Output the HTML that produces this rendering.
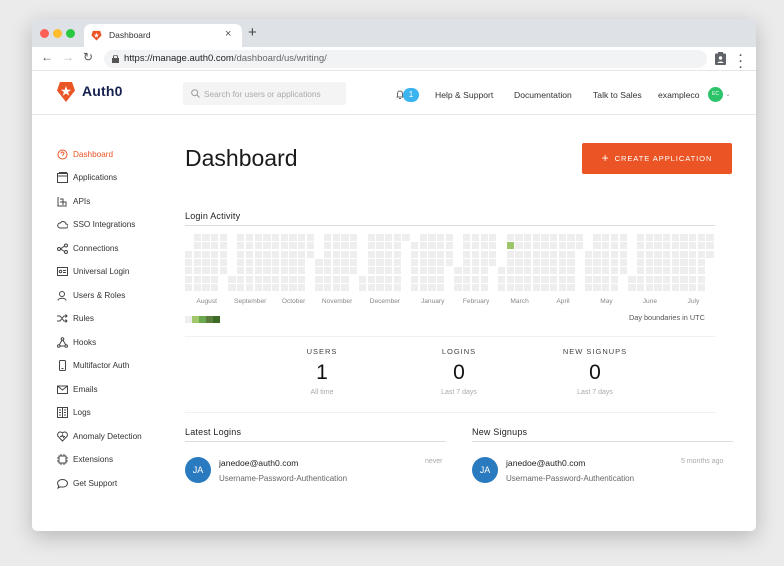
<!DOCTYPE html>
<html><head><meta charset="utf-8"><style>
*{box-sizing:border-box;margin:0;padding:0}
body{width:784px;height:566px;background:#ebebeb;font-family:"Liberation Sans",sans-serif;position:relative;overflow:hidden}
.win{position:absolute;left:32px;top:19px;width:724px;height:512px;background:#fff;border-radius:5px;overflow:hidden;box-shadow:0 6px 22px rgba(0,0,0,.22)}
.tabbar{position:absolute;left:0;top:0;width:100%;height:28px;background:#dee1e6}
.dot{position:absolute;top:10px;width:9px;height:9px;border-radius:50%}
.tab{position:absolute;left:52px;top:5px;width:158px;height:24px;background:#fff;border-radius:7px 7px 0 0;font-size:8.5px;color:#333}
.addr{position:absolute;left:0;top:28px;width:100%;height:24px;background:#fff;border-bottom:1px solid #e5e5e5}
.pill{position:absolute;left:72px;top:3px;width:603px;height:18px;background:#f1f3f4;border-radius:9px;font-size:9.5px;color:#222;line-height:18px;padding-left:20px}
.abs{position:absolute}
.hdr{position:absolute;left:0;top:52px;width:100%;height:44px;border-bottom:1px solid #e8e8e8}
.nav{font-size:8.6px;color:#333;position:absolute;top:71px}
.side{position:absolute;left:41px;font-size:8.2px;color:#333}
.side div{position:absolute;left:0;white-space:nowrap;height:12px;line-height:12px}
.side svg{position:absolute;left:-16px;top:0}
.sec{position:absolute;font-size:9px;color:#222;letter-spacing:.2px}
.line{position:absolute;height:1px;background:#dcdcdc}
.mo{position:absolute;top:279px;font-size:6.6px;color:#888;transform:translateX(-50%)}
.stat{position:absolute;text-align:center;width:120px;transform:translateX(-50%)}
.stat .l{font-size:7.5px;letter-spacing:1px;color:#444}
.stat .n{font-size:21px;color:#111;margin-top:5px}
.stat .s{font-size:7px;color:#aaa;margin-top:4px}
.av{position:absolute;width:26px;height:26px;border-radius:50%;background:#2a7abf;color:#fff;font-size:9px;text-align:center;line-height:26px}
</style></head><body>
<div class="win">
<div class="tabbar">
<div class="dot" style="left:8px;background:#fe5f57"></div>
<div class="dot" style="left:21px;background:#febc2e"></div>
<div class="dot" style="left:34px;background:#28c840"></div>
<div class="tab">
<svg class="abs" style="left:7px;top:6px" width="11" height="11" viewBox="0 0 12 12"><path d="M2 1h8l1.5 5L6 11.5 .5 6z" fill="#eb5424"/><path d="M6 3l.8 2h2l-1.6 1.3.6 2L6 7.1 4.2 8.3l.6-2L3.2 5h2z" fill="#fff"/></svg>
<span class="abs" style="left:25px;top:6px">Dashboard</span>
<span class="abs" style="left:141px;top:4px;font-size:11px;color:#555">×</span>
</div>
<span class="abs" style="left:216px;top:5px;font-size:15px;color:#444">+</span>
</div>
<div class="addr">
<span class="abs" style="left:9px;top:3px;font-size:12px;color:#555">←</span>
<span class="abs" style="left:30px;top:3px;font-size:12px;color:#bbb">→</span>
<span class="abs" style="left:51px;top:3px;font-size:12px;color:#555">↻</span>
<div class="pill"><svg class="abs" style="left:8px;top:5px" width="7" height="8" viewBox="0 0 7 8"><rect x="0" y="3" width="7" height="5" fill="#555"/><path d="M1.5 3.5V2a2 2 0 014 0v1.5" stroke="#555" fill="none"/></svg>https://manage.auth0.com<span style="color:#666">/dashboard/us/writing/</span></div>
<svg class="abs" style="left:683px;top:5px" width="11" height="13" viewBox="0 0 11 13"><rect x="0" y="1.5" width="11" height="11.5" rx="1" fill="#5f6368"/><rect x="3" y="0" width="5" height="3" fill="#5f6368"/><circle cx="5.5" cy="6" r="1.7" fill="#fff"/><path d="M2.5 11c0-2 6-2 6 0z" fill="#fff"/></svg>
<span class="abs" style="left:707px;font-size:11px;color:#555;font-weight:bold;line-height:6px;top:6px">·<br>·<br>·</span>
</div>
<div class="hdr"></div>
<svg class="abs" style="left:24px;top:62px" width="20" height="22" viewBox="0 0 20 22"><path d="M4 1h12l3 8.5L10 21 1 9.5z" fill="#eb5424"/><path d="M10 5l1.3 3.7h3.9l-3.1 2.3 1.2 3.8L10 12.5l-3.3 2.3 1.2-3.8-3.1-2.3h3.9z" fill="#fff"/></svg>
<span class="abs" style="left:50px;top:64px;font-size:14px;color:#16214d;font-weight:bold;letter-spacing:.2px">Auth0</span>
<div class="abs" style="left:151px;top:63px;width:163px;height:23px;background:#f4f4f4;border-radius:2px"></div>
<svg class="abs" style="left:159px;top:70px" width="9" height="9" viewBox="0 0 9 9"><circle cx="3.7" cy="3.7" r="3" stroke="#999" fill="none"/><path d="M6 6l2.5 2.5" stroke="#999"/></svg>
<span class="abs" style="left:172px;top:70px;font-size:8.3px;color:#aaa">Search for users or applications</span>
<svg class="abs" style="left:364px;top:71px" width="8" height="9" viewBox="0 0 8 9"><path d="M1.5 7V3.5a2.5 2.5 0 015 0V7M.5 7h7M3 8.5h2" stroke="#666" fill="none"/></svg>
<div class="abs" style="left:371px;top:69px;width:16px;height:14px;border-radius:7px;background:#3bb4ef;color:#fff;font-size:8px;text-align:center;line-height:14px">1</div>
<span class="nav" style="left:403px">Help &amp; Support</span>
<span class="nav" style="left:482px">Documentation</span>
<span class="nav" style="left:561px">Talk to Sales</span>
<span class="nav" style="left:626px">exampleco</span>
<div class="abs" style="left:676px;top:68px;width:15px;height:15px;border-radius:50%;background:#2dc36a;color:#fff;font-size:5px;text-align:center;line-height:15px">EC</div>
<span class="abs" style="left:693px;top:71px;font-size:7px;color:#999">⌄</span>

<div class="side">
<div style="top:130px;color:#eb5424"><svg width="11" height="11" viewBox="0 0 11 11"><circle cx="5.5" cy="5.5" r="4.5" stroke="#eb5424" fill="none"/><path d="M4 4.5a1.5 1.5 0 113 0c0 1-1.5 1-1.5 2.3" stroke="#eb5424" fill="none"/></svg>Dashboard</div>
<div style="top:153px"><svg width="11" height="11" viewBox="0 0 11 11"><rect x=".5" y="1.5" width="10" height="9" stroke="#444" fill="none"/><path d="M.5 4h10M2 .5h8" stroke="#444"/></svg>Applications</div>
<div style="top:177px"><svg width="11" height="11" viewBox="0 0 11 11"><path d="M1 1v9h9M3 3h3v6M6 6h3v3M3 6h6" stroke="#444" fill="none"/></svg>APIs</div>
<div style="top:200px"><svg width="11" height="11" viewBox="0 0 11 11"><path d="M3 9h6a2 2 0 000-4 3 3 0 00-5.5-1A2.5 2.5 0 003 9z" stroke="#444" fill="none"/></svg>SSO Integrations</div>
<div style="top:224px"><svg width="11" height="11" viewBox="0 0 11 11"><circle cx="2" cy="6" r="1.5" stroke="#444" fill="none"/><circle cx="9" cy="2.5" r="1.5" stroke="#444" fill="none"/><circle cx="9" cy="9" r="1.5" stroke="#444" fill="none"/><path d="M3.5 6l4-3M3.5 6l4 2.5" stroke="#444"/></svg>Connections</div>
<div style="top:247px"><svg width="11" height="11" viewBox="0 0 11 11"><rect x=".5" y="1.5" width="10" height="8" stroke="#444" fill="none"/><circle cx="3.5" cy="5.5" r="1.3" stroke="#444" fill="none"/><path d="M6 4.5h3M6 6.5h3" stroke="#444"/></svg>Universal Login</div>
<div style="top:271px"><svg width="11" height="11" viewBox="0 0 11 11"><circle cx="5" cy="4" r="2.5" stroke="#444" fill="none"/><path d="M1 10.5c0-3 8-3 8 0" stroke="#444" fill="none"/></svg>Users &amp; Roles</div>
<div style="top:294px"><svg width="11" height="11" viewBox="0 0 11 11"><path d="M0 3h3l4 5h3M0 8h3l4-5h3M8.5 1.5L10 3 8.5 4.5M8.5 6.5L10 8 8.5 9.5" stroke="#444" fill="none"/></svg>Rules</div>
<div style="top:318px"><svg width="11" height="11" viewBox="0 0 11 11"><circle cx="5.5" cy="2" r="1.3" stroke="#444" fill="none"/><circle cx="1.8" cy="9" r="1.3" stroke="#444" fill="none"/><circle cx="9.2" cy="9" r="1.3" stroke="#444" fill="none"/><path d="M5 3.2L2.3 7.8M6 3.2l2.7 4.6M3 9h5" stroke="#444"/></svg>Hooks</div>
<div style="top:341px"><svg width="11" height="11" viewBox="0 0 11 11"><rect x="2.5" y=".5" width="6" height="10" rx="1" stroke="#444" fill="none"/><path d="M4.5 8.5h2" stroke="#444"/></svg>Multifactor Auth</div>
<div style="top:365px"><svg width="11" height="11" viewBox="0 0 11 11"><rect x=".5" y="2" width="10" height="7.5" stroke="#444" fill="none"/><path d="M.5 2l5 4 5-4" stroke="#444" fill="none"/></svg>Emails</div>
<div style="top:388px"><svg width="11" height="11" viewBox="0 0 11 11"><rect x=".5" y=".5" width="10" height="10" stroke="#444" fill="none"/><path d="M5.5 .5v10M2 3h2M2 5.5h2M2 8h2M7 3h2M7 5.5h2M7 8h2" stroke="#444"/></svg>Logs</div>
<div style="top:412px"><svg width="11" height="11" viewBox="0 0 11 11"><path d="M5.5 10L1.2 5.5A2.5 2.5 0 015.5 2a2.5 2.5 0 014.3 3.5z" stroke="#444" fill="none"/><path d="M3 5.5h1.5l1-1.5 1 2.5.8-1H8" stroke="#444" fill="none"/></svg>Anomaly Detection</div>
<div style="top:435px"><svg width="11" height="11" viewBox="0 0 11 11"><rect x="2" y="2" width="7" height="7" stroke="#444" fill="none"/><path d="M4 0v2M7 0v2M4 9v2M7 9v2M0 4h2M0 7h2M9 4h2M9 7h2" stroke="#444"/></svg>Extensions</div>
<div style="top:459px"><svg width="11" height="11" viewBox="0 0 11 11"><path d="M5.5 1.5c2.8 0 5 1.7 5 3.8s-2.2 3.8-5 3.8c-.7 0-1.3-.1-1.9-.3L1 10l.9-2.2C1 7.1.5 6.2.5 5.3.5 3.2 2.7 1.5 5.5 1.5z" stroke="#444" fill="none"/></svg>Get Support</div>
</div>

<span class="abs" style="left:153px;top:126px;font-size:23px;color:#1a1a1a">Dashboard</span>
<div class="abs" style="left:550px;top:124px;width:150px;height:31px;background:#eb5424;border-radius:2px;color:#fff;font-size:7.6px;letter-spacing:.9px;line-height:31px;text-align:center"><span style="font-size:12px;vertical-align:-1px;margin-right:5px">+</span>CREATE APPLICATION</div>

<span class="sec" style="left:153px;top:192px">Login Activity</span>
<div class="line" style="left:153px;top:206px;width:530px"></div>
<div id="grid"></div>
<span class="abs" style="left:597px;top:294px;font-size:7.3px;color:#555">Day boundaries in UTC</span>
<div class="abs" style="left:153px;top:297px;width:7px;height:7px;background:#eee"></div>
<div class="abs" style="left:160px;top:297px;width:7px;height:7px;background:#a1c76b"></div>
<div class="abs" style="left:167px;top:297px;width:7px;height:7px;background:#6aa84f"></div>
<div class="abs" style="left:174px;top:297px;width:7px;height:7px;background:#5b7d3c"></div>
<div class="abs" style="left:181px;top:297px;width:7px;height:7px;background:#3d6b26"></div>
<div class="line" style="left:153px;top:317px;width:530px;background:#f0f0f0"></div>

<div class="stat" style="left:290px;top:328px"><div class="l">USERS</div><div class="n">1</div><div class="s">All time</div></div>
<div class="stat" style="left:427px;top:328px"><div class="l">LOGINS</div><div class="n">0</div><div class="s">Last 7 days</div></div>
<div class="stat" style="left:563px;top:328px"><div class="l">NEW SIGNUPS</div><div class="n">0</div><div class="s">Last 7 days</div></div>
<div class="line" style="left:153px;top:393px;width:530px;background:#f0f0f0"></div>

<span class="sec" style="left:153px;top:408px">Latest Logins</span>
<div class="line" style="left:153px;top:422px;width:261px"></div>
<span class="sec" style="left:440px;top:408px">New Signups</span>
<div class="line" style="left:440px;top:422px;width:261px"></div>
<div class="av" style="left:153px;top:438px">JA</div>
<span class="abs" style="left:187px;top:439px;font-size:8.6px;color:#222">janedoe@auth0.com</span>
<span class="abs" style="left:187px;top:455px;font-size:8px;color:#666">Username-Password-Authentication</span>
<span class="abs" style="left:393px;top:439px;font-size:7px;color:#aaa">never</span>
<div class="av" style="left:440px;top:438px">JA</div>
<span class="abs" style="left:474px;top:439px;font-size:8.6px;color:#222">janedoe@auth0.com</span>
<span class="abs" style="left:474px;top:455px;font-size:8px;color:#666">Username-Password-Authentication</span>
<span class="abs" style="left:649px;top:439px;font-size:7px;color:#aaa">5 months ago</span>
</div>
<script>
var g=document.getElementById('grid'),h='';
var months=[[2,31,'August'],[5,30,'September'],[0,31,'October'],[3,30,'November'],[5,31,'December'],[1,31,'January'],[4,28,'February'],[4,31,'March'],[0,30,'April'],[2,31,'May'],[5,30,'June'],[0,31,'July']];
var col=0,P=8.69,X=153,Y=215,RP=8.35;
months.forEach(function(m,mi){var s=col;var d=m[0];for(var i=1;i<=m[1];i++){var c='#eee';if(mi==7&&i==5)c='#9cc46a';h+='<div style="position:absolute;left:'+(X+col*P).toFixed(1)+'px;top:'+(Y+d*RP).toFixed(1)+'px;width:7.4px;height:7.1px;background:'+c+'"></div>';d++;if(d==7&&i<m[1]){d=0;col++;}}col++;var cx=X+(s+col)/2*P;h+='<span class="mo" style="left:'+cx.toFixed(1)+'px">'+m[2]+'</span>';});
g.innerHTML=h;
</script>
</body></html>
